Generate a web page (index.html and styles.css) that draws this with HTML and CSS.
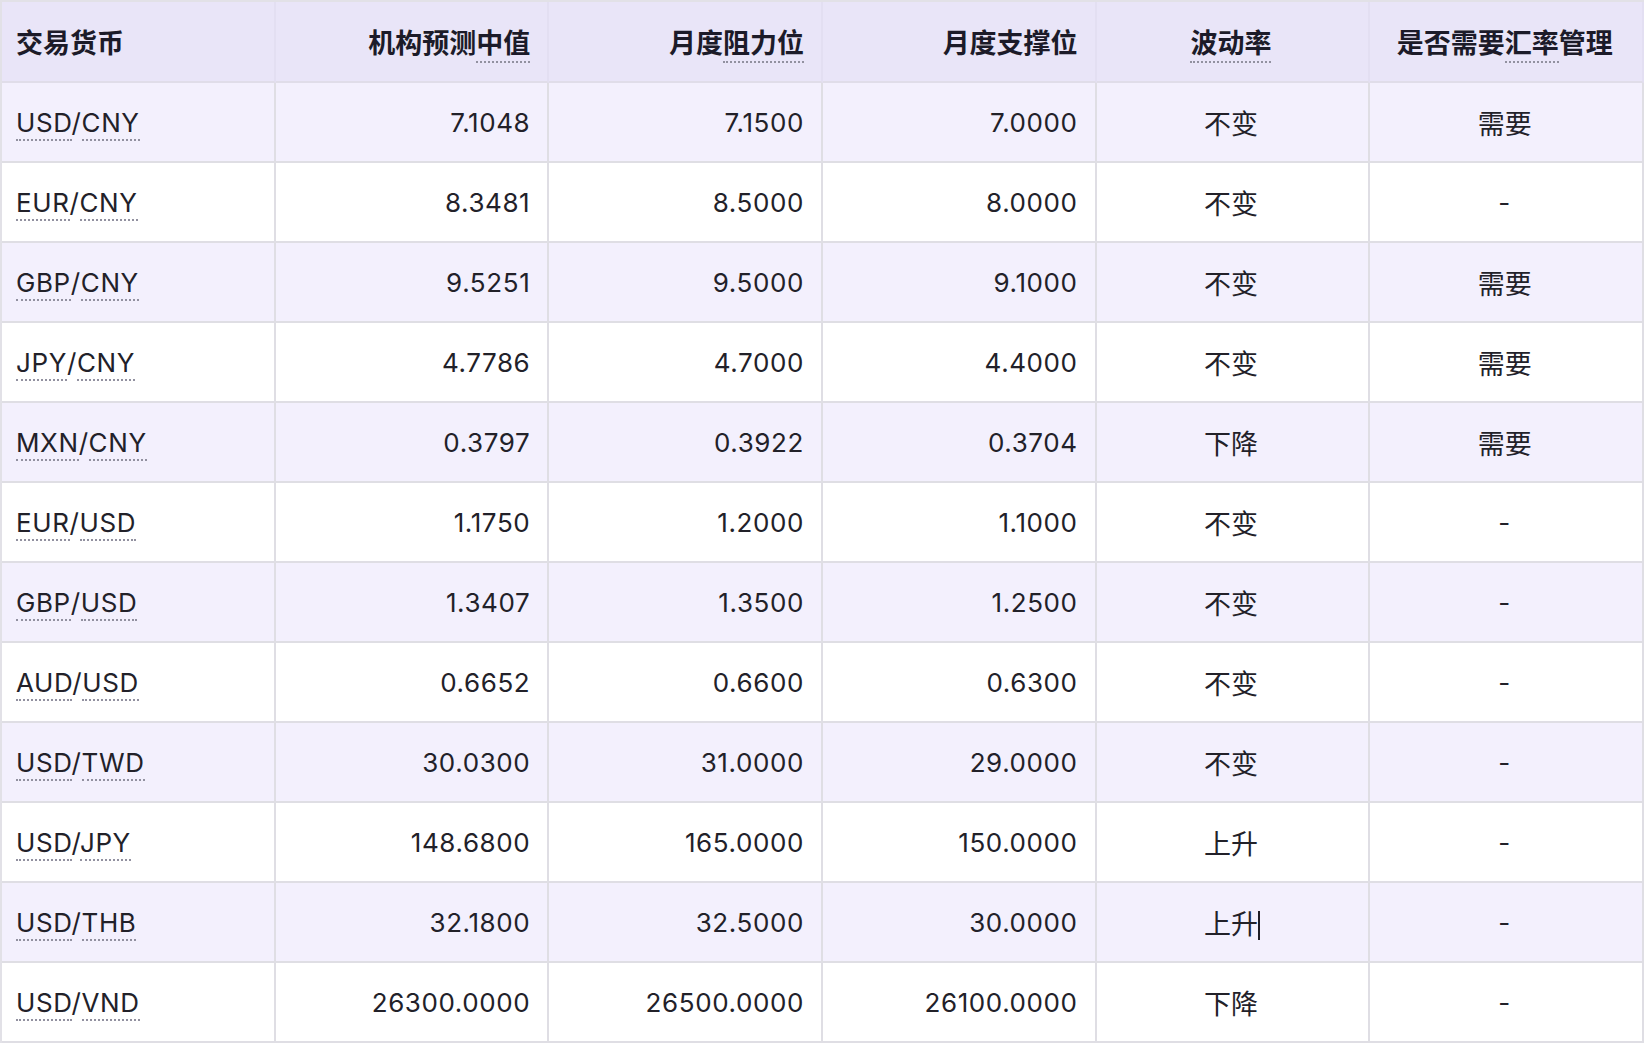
FILE: index.html
```html
<!DOCTYPE html>
<html lang="zh-CN">
<head>
<meta charset="utf-8">
<title>汇率预测</title>
<link rel="stylesheet" href="styles.css">
</head>
<body>
<table class="fx">
  <thead>
    <tr>
      <th class="l"><span class="zh">交易货币</span></th>
      <th class="r"><span class="zh">机构预测<span class="hu">中值</span></span></th>
      <th class="r"><span class="zh">月度<span class="hu">阻力位</span></span></th>
      <th class="r"><span class="zh">月度支撑位</span></th>
      <th class="c"><span class="zh"><span class="hu">波动率</span></span></th>
      <th class="c"><span class="zh">是否需要<span class="hu">汇率</span>管理</span></th>
    </tr>
  </thead>
  <tbody>
    <tr><td class="l"><span class="du">USD</span>/<span class="du">CNY</span></td><td class="r">7.1048</td><td class="r">7.1500</td><td class="r">7.0000</td><td class="c"><span class="zh">不变</span></td><td class="c"><span class="zh">需要</span></td></tr>
    <tr><td class="l"><span class="du">EUR</span>/<span class="du">CNY</span></td><td class="r">8.3481</td><td class="r">8.5000</td><td class="r">8.0000</td><td class="c"><span class="zh">不变</span></td><td class="c">-</td></tr>
    <tr><td class="l"><span class="du">GBP</span>/<span class="du">CNY</span></td><td class="r">9.5251</td><td class="r">9.5000</td><td class="r">9.1000</td><td class="c"><span class="zh">不变</span></td><td class="c"><span class="zh">需要</span></td></tr>
    <tr><td class="l"><span class="du">JPY</span>/<span class="du">CNY</span></td><td class="r">4.7786</td><td class="r">4.7000</td><td class="r">4.4000</td><td class="c"><span class="zh">不变</span></td><td class="c"><span class="zh">需要</span></td></tr>
    <tr><td class="l"><span class="du">MXN</span>/<span class="du">CNY</span></td><td class="r">0.3797</td><td class="r">0.3922</td><td class="r">0.3704</td><td class="c"><span class="zh">下降</span></td><td class="c"><span class="zh">需要</span></td></tr>
    <tr><td class="l"><span class="du">EUR</span>/<span class="du">USD</span></td><td class="r">1.1750</td><td class="r">1.2000</td><td class="r">1.1000</td><td class="c"><span class="zh">不变</span></td><td class="c">-</td></tr>
    <tr><td class="l"><span class="du">GBP</span>/<span class="du">USD</span></td><td class="r">1.3407</td><td class="r">1.3500</td><td class="r">1.2500</td><td class="c"><span class="zh">不变</span></td><td class="c">-</td></tr>
    <tr><td class="l"><span class="du">AUD</span>/<span class="du">USD</span></td><td class="r">0.6652</td><td class="r">0.6600</td><td class="r">0.6300</td><td class="c"><span class="zh">不变</span></td><td class="c">-</td></tr>
    <tr><td class="l"><span class="du">USD</span>/<span class="du">TWD</span></td><td class="r">30.0300</td><td class="r">31.0000</td><td class="r">29.0000</td><td class="c"><span class="zh">不变</span></td><td class="c">-</td></tr>
    <tr><td class="l"><span class="du">USD</span>/<span class="du">JPY</span></td><td class="r">148.6800</td><td class="r">165.0000</td><td class="r">150.0000</td><td class="c"><span class="zh">上升</span></td><td class="c">-</td></tr>
    <tr><td class="l"><span class="du">USD</span>/<span class="du">THB</span></td><td class="r">32.1800</td><td class="r">32.5000</td><td class="r">30.0000</td><td class="c"><span class="zh">上升</span><span class="caret"></span></td><td class="c">-</td></tr>
    <tr><td class="l"><span class="du">USD</span>/<span class="du">VND</span></td><td class="r">26300.0000</td><td class="r">26500.0000</td><td class="r">26100.0000</td><td class="c"><span class="zh">下降</span></td><td class="c">-</td></tr>
  </tbody>
</table>
</body>
</html>
```

FILE: styles.css
```css
html, body {
  margin: 0;
  padding: 0;
  background: #ffffff;
}

body {
  font-family: "Inter", "Noto Sans CJK SC", sans-serif;
  color: #1e1d26;
}

.fx {
  width: 1644px;
  table-layout: fixed;
  border-collapse: separate;
  border-spacing: 0;
  border-top: 2px solid #e2e1e7;
  border-left: 2px solid #e2e1e7;
  font-size: 26px;
  letter-spacing: 0.6px;
}

.fx th,
.fx td {
  border-right: 2px solid #dfdee4;
  border-bottom: 2px solid #dfdee4;
  padding: 0 17px 0 14px;
  white-space: nowrap;
}

.fx thead tr {
  height: 81px;
}

.fx thead th {
  background: #e9e5f8;
  font-weight: 600;
  color: #1c1b29;
  border-right-color: #e3dff2;
  border-bottom-color: #e0dde9;
}

.fx tbody tr {
  height: 80px;
}

.fx tbody tr:nth-child(odd) td {
  background: #f3f0fd;
}

.fx tbody tr:nth-child(even) td {
  background: #ffffff;
}

.fx td {
  font-weight: 400;
  color: #222129;
}

.l { text-align: left; }
.r { text-align: right; }
.c { text-align: center; padding-left: 16px; padding-right: 16px; }

.zh {
  font-size: 27px;
  letter-spacing: 0;
}

.fx td .zh {
  vertical-align: 2px;
}

.fx th .zh {
  vertical-align: 1px;
}

.hu {
  border-bottom: 2px dotted #9291a0;
  padding-bottom: 1px;
}

.du {
  border-bottom: 2px dotted #9291a0;
  padding-bottom: 1px;
}

.caret {
  display: inline-block;
  width: 2px;
  height: 29px;
  margin-right: -2px;
  background: #1e1d26;
  vertical-align: -4px;
}
```
